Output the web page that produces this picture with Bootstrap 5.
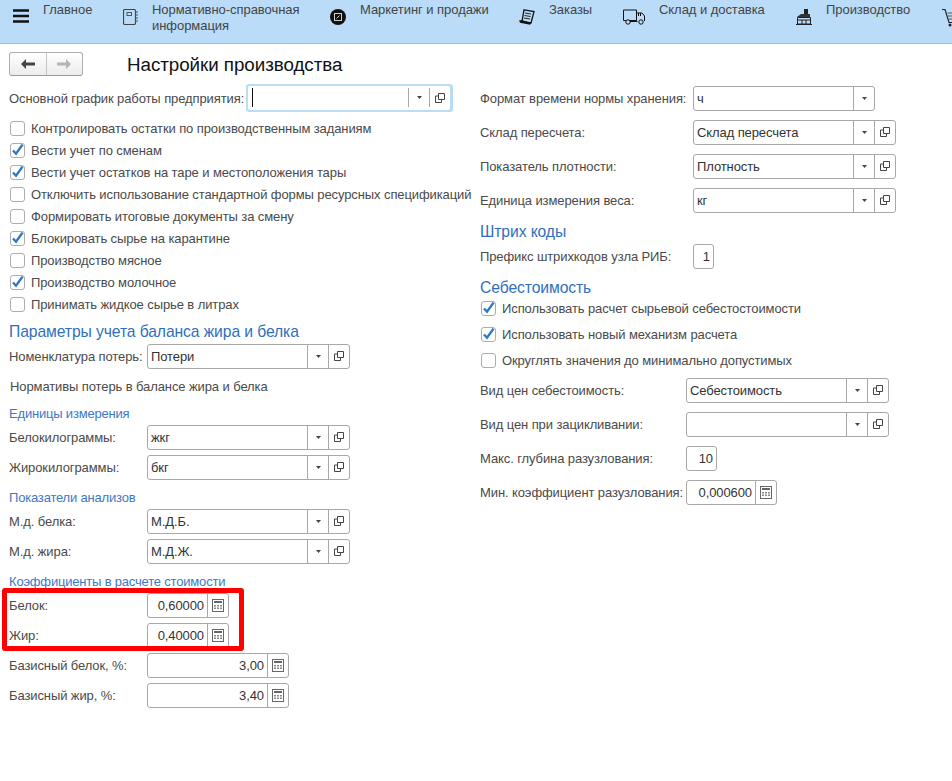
<!DOCTYPE html>
<html lang="ru">
<head>
<meta charset="utf-8">
<title>Настройки производства</title>
<link rel="stylesheet" href="https://cdn.jsdelivr.net/npm/bootstrap@5.3.0/dist/css/bootstrap.min.css">
<style>
html,body{height:100%;}
body{width:952px;height:781px;overflow:hidden;background:#fff;font-family:"Liberation Sans",Arial,sans-serif;font-size:13px;line-height:16px;color:#4a4a4a;letter-spacing:-.1px;}
.topbar{height:44px;background:#bbdcf8;border-bottom:1px solid #9fb8cf;overflow:hidden;color:#444;padding-top:2px;letter-spacing:-.05px;}
.tb-item{flex:none;gap:14px;}
.tb-item svg{flex:none;margin-top:7px;}
.w-1{width:110px;margin-left:13px;}.w-2{width:207px;}.w-3{width:189px;}.w-4{width:104px;}.w-5{width:173px;}.w-6{width:146px;}.w-7{width:40px;}
.title-row{height:37px;padding:8px 0 0 9px;}
.navbtns{width:74px;height:24px;border:1px solid #b0b0b0;border-bottom-color:#999;border-radius:3px;background:linear-gradient(#fff,#ececec);}
.navbtns .btn{flex:1;padding:0;border:0;border-radius:0;display:flex;align-items:center;justify-content:center;}
.navbtns .btn+.btn{border-left:1px solid #c4c4c4;}
.ttl{font-size:18.8px;line-height:24px;color:#111;margin:1px 0 0 44px;font-weight:400;letter-spacing:-.05px;}
.lc{width:480px;padding-left:9px;padding-top:2px;flex:none;white-space:nowrap;}
.rc{flex:none;white-space:nowrap;}
.r22{height:22px;padding-top:2px;}.r26{height:26px;padding-top:2px;}.r30{height:30px;}.r32{height:32px;}.r34{height:34px;}
.hd{font-size:15.7px;line-height:20px;color:#2f6fbe;margin:0;font-weight:400;}
.sub{font-size:13px;line-height:18px;color:#3d78c6;margin:0;font-weight:400;letter-spacing:-.19px;}
.hl26{height:26px;padding-top:7px;}.hl24a{height:24px;padding-top:5px;}.hl24b{height:24px;padding-top:7px;}.hl24c{height:24px;padding-top:7px;}.hl19{height:19px;padding-top:2px;}
.lb{flex:none;padding-top:2px;}
.lb-138{width:138px;}.lb-237{width:237px;}.lb-213{width:213px;}.lb-206{width:206px;}
.txt-ind{padding-left:1px;}
.fld{height:25px;border:1px solid #a8a8a8;border-radius:3px;background:#fff;color:#333;}
.fld-val{flex:1;min-width:0;padding:0 3px;line-height:23px;white-space:nowrap;overflow:hidden;}
.fld-num{text-align:right;padding-right:3px;}
.fld-btn{flex:none;width:21px;border-left:1px solid #a8a8a8;display:flex;align-items:center;justify-content:center;}
.f203{width:203px;}.f182{width:182px;}.f82{width:82px;}.f142{width:142px;}.f21{width:21px;}.f31{width:31px;}.f91{width:91px;}
.fbox{padding:2px 3px 2px 2px;border-radius:3px;background:#b9dcf7;width:207px;height:28px;}
.fbox .fld{height:24px;border:0;border-radius:2px;}
.fbox .fld-btn{height:19px;margin-top:2px;}
.caret-line{width:1px;height:19px;background:#111;margin:2px 0 0 4px;}
.form-check-input.ck{width:15px;height:15px;margin:-2px 6px 0 1px;flex:none;border:1px solid #adadad;border-radius:3px;background-color:#fff;box-shadow:none;}
.form-check-input.ck:checked{background-color:#fff;border-color:#adadad;background-size:15px 15px;background-position:center;background-image:url("data:image/svg+xml,%3Csvg xmlns='http://www.w3.org/2000/svg' viewBox='0 0 15 15'%3E%3Cpath d='M3 7.500l3 3.200L12.600 1.600' fill='none' stroke='%232f78c4' stroke-width='2.400'/%3E%3C/svg%3E");}
.hlbox{position:absolute;left:-7px;top:-2px;width:242px;height:63px;border:5px solid #f00;border-radius:3px;pointer-events:none;}
</style>
</head>
<body>
<svg width="0" height="0" class="position-absolute">
<defs>
<symbol id="calc" viewBox="0 0 12 13"><rect x=".5" y=".5" width="11" height="12" fill="#fff" stroke="#666"/><rect x="2" y="2" width="8" height="2" fill="#666"/><path d="M2 6h2v1.500H2zM5 6h2v1.500H5zM8 6h2v1.500H8zM2 8.500h2V10H2zM5 8.500h2V10H5zM8 8.500h2V10H8z" fill="#888"/></symbol>
<symbol id="dd" viewBox="0 0 5 3"><path d="M0 0h5L2.500 3z" fill="#444"/></symbol>
<symbol id="cp" viewBox="0 0 10 10"><path d="M3.500 .5h6v6h-6z" fill="#fff" stroke="#444"/><path d="M3 3H.5v6.500h6V7" fill="none" stroke="#444"/></symbol>
</defs>
</svg>

<nav class="topbar d-flex">
  <div class="tb-item w-1 d-flex"><svg width="16" height="14" viewBox="0 0 16 14"><path d="M0 1.500h16M0 7h16M0 12.500h16" stroke="#111" stroke-width="2.400"/></svg><span>Главное</span></div>
  <div class="tb-item w-2 d-flex"><svg width="15" height="16" viewBox="0 0 15 16"><rect x=".5" y=".5" width="12" height="15" rx="1.500" fill="none" stroke="#444" stroke-width="1.200"/><rect x="4" y="3.500" width="4.500" height="3" fill="none" stroke="#555"/><path d="M12 3h3M12 6h3M12 9h3M12 12h3" stroke="#555"/></svg><span>Нормативно-справочная<br>информация</span></div>
  <div class="tb-item w-3 d-flex"><svg width="16" height="16" viewBox="0 0 16 16"><circle cx="8" cy="8" r="8" fill="#111"/><rect x="4.500" y="4.500" width="7" height="7" fill="none" stroke="#cfcfcf"/><path d="M6.500 9.500l3-3" stroke="#cfcfcf"/></svg><span>Маркетинг и продажи</span></div>
  <div class="tb-item w-4 d-flex"><svg width="16" height="16" viewBox="0 0 16 16"><path d="M5 .8l10 1.700-3 11.500-9-1.500z" fill="#bbdcf8" stroke="#111" stroke-width="1.300"/><path d="M6 4l6 1M5.500 6.500l6 1M5 9l6 1" stroke="#222"/><path d="M0 11.500l3-.5 9 3-1 1.800-10-2z" fill="#111"/></svg><span>Заказы</span></div>
  <div class="tb-item w-5 d-flex"><svg width="22" height="16" viewBox="0 0 22 16"><path d="M.5 1h13v10.500H.5z" fill="none" stroke="#111"/><path d="M14 4h5l2.500 3v5" fill="none" stroke="#111"/><path d="M15 4h1v3h-1zM17 4h1v3h-1z" fill="#111"/><path d="M7 12.500h7.500" stroke="#111"/><circle cx="5" cy="13" r="2.200" fill="#bbdcf8" stroke="#111"/><circle cx="18" cy="13" r="2.200" fill="#bbdcf8" stroke="#111"/></svg><span>Склад и доставка</span></div>
  <div class="tb-item w-6 d-flex"><svg width="16" height="16" viewBox="0 0 16 16"><path d="M8 0h4v6H8z" fill="#222"/><path d="M1 8l4-3h9v3z" fill="#333"/><path d="M1.500 8.500h13V15h-13z" fill="none" stroke="#222"/><path d="M0 15.500h16" stroke="#222"/><path d="M1.500 11h13M6 11v4M10 11v4" stroke="#222"/></svg><span>Производство</span></div>
  <div class="tb-item w-7 d-flex"><svg width="16" height="20" viewBox="0 0 16 20"><path d="M0 .5h3l4 13h6" fill="none" stroke="#222" stroke-width="1.200"/><path d="M5.500 4H14M6 7h8M7 10h7" stroke="#555"/><circle cx="8" cy="16" r="1.500" fill="#222"/><circle cx="13" cy="16" r="1.500" fill="#222"/></svg></div>
</nav>

<div class="title-row d-flex">
  <div class="navbtns d-flex">
    <button type="button" class="btn" aria-label="Назад"><svg width="14" height="10" viewBox="0 0 14 10"><path d="M0 5l5-5v3.500h9v3H5V10z" fill="#444"/></svg></button>
    <button type="button" class="btn" aria-label="Вперёд"><svg width="14" height="10" viewBox="0 0 14 10"><path d="M14 5L9 0v3.500H0v3h9V10z" fill="#b4b4b4"/></svg></button>
  </div>
  <h1 class="ttl">Настройки производства</h1>
</div>

<main class="d-flex">
  <div class="lc">
    <div class="r30 d-flex align-items-center">
      <span class="lb lb-237">Основной график работы предприятия:</span>
      <div class="fbox"><div class="fld d-flex">
        <div class="fld-val p-0"><div class="caret-line"></div></div>
        <span class="fld-btn"><svg width="5" height="3"><use href="#dd"/></svg></span>
        <span class="fld-btn"><svg width="10" height="10"><use href="#cp"/></svg></span>
      </div></div>
    </div>
    <div class="mt-1">
      <label class="r22 d-flex align-items-center"><input class="form-check-input ck" type="checkbox">Контролировать остатки по производственным заданиям</label>
      <label class="r22 d-flex align-items-center"><input class="form-check-input ck" type="checkbox" checked>Вести учет по сменам</label>
      <label class="r22 d-flex align-items-center"><input class="form-check-input ck" type="checkbox" checked>Вести учет остатков на таре и местоположения тары</label>
      <label class="r22 d-flex align-items-center"><input class="form-check-input ck" type="checkbox">Отключить использование стандартной формы ресурсных спецификаций</label>
      <label class="r22 d-flex align-items-center"><input class="form-check-input ck" type="checkbox">Формировать итоговые документы за смену</label>
      <label class="r22 d-flex align-items-center"><input class="form-check-input ck" type="checkbox" checked>Блокировать сырье на карантине</label>
      <label class="r22 d-flex align-items-center"><input class="form-check-input ck" type="checkbox">Производство мясное</label>
      <label class="r22 d-flex align-items-center"><input class="form-check-input ck" type="checkbox" checked>Производство молочное</label>
      <label class="r22 d-flex align-items-center"><input class="form-check-input ck" type="checkbox">Принимать жидкое сырье в литрах</label>
    </div>
    <div class="hl26"><h2 class="hd">Параметры учета баланса жира и белка</h2></div>
    <div class="r30 d-flex align-items-center"><span class="lb lb-138">Номенклатура потерь:</span><div class="fld f203 d-flex"><span class="fld-val">Потери</span><span class="fld-btn"><svg width="5" height="3"><use href="#dd"/></svg></span><span class="fld-btn"><svg width="10" height="10"><use href="#cp"/></svg></span></div></div>
    <div class="r32 d-flex align-items-center txt-ind">Нормативы потерь в балансе жира и белка</div>
    <div class="hl19"><h3 class="sub">Единицы измерения</h3></div>
    <div class="r30 d-flex align-items-center"><span class="lb lb-138">Белокилограммы:</span><div class="fld f203 d-flex"><span class="fld-val">жкг</span><span class="fld-btn"><svg width="5" height="3"><use href="#dd"/></svg></span><span class="fld-btn"><svg width="10" height="10"><use href="#cp"/></svg></span></div></div>
    <div class="r30 d-flex align-items-center"><span class="lb lb-138">Жирокилограммы:</span><div class="fld f203 d-flex"><span class="fld-val">бкг</span><span class="fld-btn"><svg width="5" height="3"><use href="#dd"/></svg></span><span class="fld-btn"><svg width="10" height="10"><use href="#cp"/></svg></span></div></div>
    <div class="hl24c"><h3 class="sub">Показатели анализов</h3></div>
    <div class="r30 d-flex align-items-center"><span class="lb lb-138">М.д. белка:</span><div class="fld f203 d-flex"><span class="fld-val">М.Д.Б.</span><span class="fld-btn"><svg width="5" height="3"><use href="#dd"/></svg></span><span class="fld-btn"><svg width="10" height="10"><use href="#cp"/></svg></span></div></div>
    <div class="r30 d-flex align-items-center"><span class="lb lb-138">М.д. жира:</span><div class="fld f203 d-flex"><span class="fld-val">М.Д.Ж.</span><span class="fld-btn"><svg width="5" height="3"><use href="#dd"/></svg></span><span class="fld-btn"><svg width="10" height="10"><use href="#cp"/></svg></span></div></div>
    <div class="hl24c"><h3 class="sub">Коэффициенты в расчете стоимости</h3></div>
    <div class="position-relative">
      <div class="r30 d-flex align-items-center"><span class="lb lb-138">Белок:</span><div class="fld f82 d-flex"><span class="fld-val fld-num">0,60000</span><span class="fld-btn"><svg width="12" height="13"><use href="#calc"/></svg></span></div></div>
      <div class="r30 d-flex align-items-center"><span class="lb lb-138">Жир:</span><div class="fld f82 d-flex"><span class="fld-val fld-num">0,40000</span><span class="fld-btn"><svg width="12" height="13"><use href="#calc"/></svg></span></div></div>
      <div class="hlbox"></div>
    </div>
    <div class="r30 d-flex align-items-center"><span class="lb lb-138">Базисный белок, %:</span><div class="fld f142 d-flex"><span class="fld-val fld-num">3,00</span><span class="fld-btn"><svg width="12" height="13"><use href="#calc"/></svg></span></div></div>
    <div class="r30 d-flex align-items-center"><span class="lb lb-138">Базисный жир, %:</span><div class="fld f142 d-flex"><span class="fld-val fld-num">3,40</span><span class="fld-btn"><svg width="12" height="13"><use href="#calc"/></svg></span></div></div>
  </div>

  <div class="rc">
    <div class="r34 d-flex align-items-center"><span class="lb lb-213">Формат времени нормы хранения:</span><div class="fld f182 d-flex"><span class="fld-val">ч</span><span class="fld-btn"><svg width="5" height="3"><use href="#dd"/></svg></span></div></div>
    <div class="r34 d-flex align-items-center"><span class="lb lb-213">Склад пересчета:</span><div class="fld f203 d-flex"><span class="fld-val">Склад пересчета</span><span class="fld-btn"><svg width="5" height="3"><use href="#dd"/></svg></span><span class="fld-btn"><svg width="10" height="10"><use href="#cp"/></svg></span></div></div>
    <div class="r34 d-flex align-items-center"><span class="lb lb-213">Показатель плотности:</span><div class="fld f203 d-flex"><span class="fld-val">Плотность</span><span class="fld-btn"><svg width="5" height="3"><use href="#dd"/></svg></span><span class="fld-btn"><svg width="10" height="10"><use href="#cp"/></svg></span></div></div>
    <div class="r34 d-flex align-items-center"><span class="lb lb-213">Единица измерения веса:</span><div class="fld f203 d-flex"><span class="fld-val">кг</span><span class="fld-btn"><svg width="5" height="3"><use href="#dd"/></svg></span><span class="fld-btn"><svg width="10" height="10"><use href="#cp"/></svg></span></div></div>
    <div class="hl24a"><h2 class="hd">Штрих коды</h2></div>
    <div class="r30 d-flex align-items-center"><span class="lb lb-213">Префикс штрихкодов узла РИБ:</span><div class="fld f21 d-flex"><span class="fld-val fld-num">1</span></div></div>
    <div class="hl24b"><h2 class="hd">Себестоимость</h2></div>
    <label class="r26 d-flex align-items-center"><input class="form-check-input ck" type="checkbox" checked>Использовать расчет сырьевой себестостоимости</label>
    <label class="r26 d-flex align-items-center"><input class="form-check-input ck" type="checkbox" checked>Использовать новый механизм расчета</label>
    <label class="r26 d-flex align-items-center"><input class="form-check-input ck" type="checkbox">Округлять значения до минимально допустимых</label>
    <div class="r34 d-flex align-items-center"><span class="lb lb-206">Вид цен себестоимость:</span><div class="fld f203 d-flex"><span class="fld-val">Себестоимость</span><span class="fld-btn"><svg width="5" height="3"><use href="#dd"/></svg></span><span class="fld-btn"><svg width="10" height="10"><use href="#cp"/></svg></span></div></div>
    <div class="r34 d-flex align-items-center"><span class="lb lb-206">Вид цен при зацикливании:</span><div class="fld f203 d-flex"><span class="fld-val"></span><span class="fld-btn"><svg width="5" height="3"><use href="#dd"/></svg></span><span class="fld-btn"><svg width="10" height="10"><use href="#cp"/></svg></span></div></div>
    <div class="r34 d-flex align-items-center"><span class="lb lb-206">Макс. глубина разузлования:</span><div class="fld f31 d-flex"><span class="fld-val fld-num">10</span></div></div>
    <div class="r34 d-flex align-items-center"><span class="lb lb-206">Мин. коэффициент разузлования:</span><div class="fld f91 d-flex"><span class="fld-val fld-num">0,000600</span><span class="fld-btn"><svg width="12" height="13"><use href="#calc"/></svg></span></div></div>
  </div>
</main>
<script src="https://cdn.jsdelivr.net/npm/bootstrap@5.3.0/dist/js/bootstrap.bundle.min.js"></script>
</body>
</html>
